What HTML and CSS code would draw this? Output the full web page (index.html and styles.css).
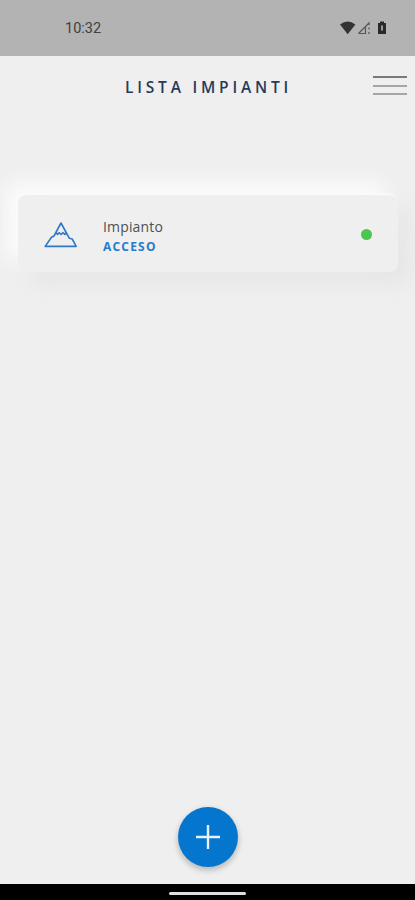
FILE: index.html
```html
<!DOCTYPE html>
<html lang="it">
<head>
  <meta charset="utf-8">
  <meta name="viewport" content="width=device-width, initial-scale=1">
  <title>Lista Impianti</title>
  <link rel="stylesheet" href="styles.css">
</head>
<body>
  <div class="status-bar">
    <span class="clock">10:32</span>
    <svg class="status-icons" width="48" height="16" viewBox="0 0 48 16">
      <path d="M0 4.6 Q7.7 -1.6 15.4 4.6 L7.7 14.2 Z" fill="#333"/>
      <path d="M18.5 13.5 L29 3 V5 M29 7.5 V9.5 M29 12 V14 M18.5 13.5 H25.5 V7" fill="none" stroke="#555" stroke-width="1.2"/>
      <path d="M40 1.5 h4 v1.5 h2 v11 h-8 v-11 h2 Z" fill="#292929"/>
      <path d="M41 5.5 h2 v5 h-2 Z" fill="#999"/>
    </svg>
  </div>

  <header>
    <h1>LISTA IMPIANTI</h1>
    <button class="menu-button" aria-label="Menu">
      <span></span>
      <span></span>
      <span></span>
    </button>
  </header>

  <main>
    <div class="card">
      <svg class="mountain" width="34" height="28" viewBox="0 0 34 28">
        <path d="M1.2 25.4 L7.5 16.2 L10 15 L17 2 L23.5 14 L25.5 17.3 L28.2 18 L32.2 25.4 Z"/>
        <path d="M12.2 11.5 L13.5 13.5 L15.3 11.7 L17.1 13.5 L19 11.7 L20.8 13.5 L22 11.5"/>
      </svg>
      <div class="card-text">
        <div class="name">Impianto</div>
        <div class="state">ACCESO</div>
      </div>
      <span class="dot"></span>
    </div>
  </main>

  <div class="add-row">
    <button class="add-button" aria-label="Aggiungi">
      <svg width="24" height="24" viewBox="0 0 24 24">
        <path d="M12 0 V24 M0 12 H24" stroke="#e6f1fb" stroke-width="2.4"/>
      </svg>
    </button>
  </div>

  <div class="nav-bar"><span></span></div>
</body>
</html>
```

FILE: styles.css
```css
* {
  box-sizing: border-box;
}
body {
  margin: 0;
  height: 900px;
  display: flex;
  flex-direction: column;
  overflow: hidden;
  font-family: "Open Sans", "Noto Sans", sans-serif;
  background-color: #efefef;
}
button {
  padding: 0;
  border: none;
  background: none;
  cursor: pointer;
}
.status-bar {
  height: 56px;
  flex: none;
  display: flex;
  align-items: center;
  justify-content: space-between;
  padding: 0 27px 0 65px;
  background-color: #b3b3b3;
}
.clock {
  font-family: Roboto, sans-serif;
  font-size: 14.5px;
  color: #404040;
}
header {
  height: 60px;
  flex: none;
  display: flex;
  align-items: center;
  justify-content: space-between;
  padding: 0 8px 0 125px;
}
h1 {
  margin: 2px 0 0;
  font-size: 15.5px;
  line-height: 20px;
  font-weight: 600;
  letter-spacing: 3.8px;
  color: #253b5b;
  white-space: nowrap;
}
.menu-button {
  width: 34px;
  height: 19px;
  margin-bottom: 1px;
  display: flex;
  flex-direction: column;
  justify-content: space-between;
}
.menu-button span {
  height: 2px;
  width: 100%;
  background-color: #a5a5a5;
}
.menu-button span:first-child {
  background-color: #77797c;
}
main {
  flex: 1;
  padding: 79px 17px 0 18px;
}
.card {
  height: 77px;
  display: flex;
  align-items: center;
  padding: 2px 26px 0;
  border-radius: 8px;
  background-color: #efefef;
  box-shadow: -12px -12px 20px #fcfcfc, 12px 12px 20px #e6e6e6, 0 -2px 1px -1px #fff;
}
.mountain {
  fill: none;
  stroke: #3179c8;
  stroke-width: 1.6;
  stroke-linejoin: round;
}
.card-text {
  flex: 1;
  margin: 5px 0 0 25px;
}
.name {
  font-size: 14px;
  line-height: 20px;
  letter-spacing: 0.15px;
  color: #505050;
}
.state {
  font-size: 12px;
  line-height: 20px;
  font-weight: 700;
  letter-spacing: 1.2px;
  color: #277bcb;
}
.dot {
  width: 11px;
  height: 11px;
  border-radius: 50%;
  background-color: #4bc74f;
}
.add-row {
  flex: none;
  display: flex;
  justify-content: center;
  padding-bottom: 17px;
}
.add-button {
  width: 60px;
  height: 60px;
  display: flex;
  align-items: center;
  justify-content: center;
  border-radius: 50%;
  background-color: #0576ce;
  box-shadow: 0 3px 6px rgba(0, 0, 0, 0.25);
}
.nav-bar {
  height: 16px;
  flex: none;
  display: flex;
  align-items: center;
  justify-content: center;
  background-color: #000;
}
.nav-bar span {
  width: 77px;
  height: 3px;
  margin-top: 2px;
  border-radius: 2px;
  background-color: #e0e0e0;
}
```
